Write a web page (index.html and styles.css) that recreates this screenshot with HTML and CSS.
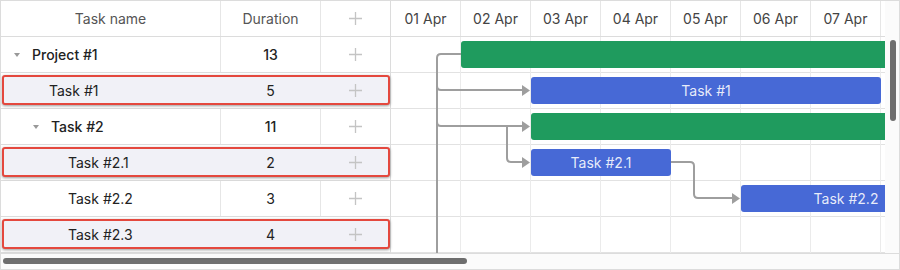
FILE: index.html
```html
<!DOCTYPE html>
<html>
<head>
<meta charset="utf-8">
<link rel="stylesheet" href="styles.css">
</head>
<body>
<div class="gantt">
  <div class="main">
    <div class="grid">
      <div class="g-head">
        <div class="c-name">Task name</div>
        <div class="c-dur">Duration</div>
        <div class="c-add"><svg class="plus" viewBox="0 0 14 14"><path d="M7 0V14M0 7H14"/></svg></div>
      </div>
      <div class="g-row bold">
        <div class="c-name"><span class="toggle open"></span><span>Project #1</span></div>
        <div class="c-dur">13</div>
        <div class="c-add"><svg class="plus" viewBox="0 0 14 14"><path d="M7 0V14M0 7H14"/></svg></div>
      </div>
      <div class="g-row selected">
        <div class="c-name"><span class="indent"></span><span class="leaf"></span><span>Task #1</span></div>
        <div class="c-dur">5</div>
        <div class="c-add"><svg class="plus" viewBox="0 0 14 14"><path d="M7 0V14M0 7H14"/></svg></div>
      </div>
      <div class="g-row bold">
        <div class="c-name"><span class="indent"></span><span class="toggle open"></span><span>Task #2</span></div>
        <div class="c-dur">11</div>
        <div class="c-add"><svg class="plus" viewBox="0 0 14 14"><path d="M7 0V14M0 7H14"/></svg></div>
      </div>
      <div class="g-row selected">
        <div class="c-name"><span class="indent"></span><span class="indent"></span><span class="leaf"></span><span>Task #2.1</span></div>
        <div class="c-dur">2</div>
        <div class="c-add"><svg class="plus" viewBox="0 0 14 14"><path d="M7 0V14M0 7H14"/></svg></div>
      </div>
      <div class="g-row">
        <div class="c-name"><span class="indent"></span><span class="indent"></span><span class="leaf"></span><span>Task #2.2</span></div>
        <div class="c-dur">3</div>
        <div class="c-add"><svg class="plus" viewBox="0 0 14 14"><path d="M7 0V14M0 7H14"/></svg></div>
      </div>
      <div class="g-row selected">
        <div class="c-name"><span class="indent"></span><span class="indent"></span><span class="leaf"></span><span>Task #2.3</span></div>
        <div class="c-dur">4</div>
        <div class="c-add"><svg class="plus" viewBox="0 0 14 14"><path d="M7 0V14M0 7H14"/></svg></div>
      </div>
    </div>
    <div class="chart">
      <div class="scale">
        <div class="day">01 Apr</div>
        <div class="day">02 Apr</div>
        <div class="day">03 Apr</div>
        <div class="day">04 Apr</div>
        <div class="day">05 Apr</div>
        <div class="day">06 Apr</div>
        <div class="day">07 Apr</div>
        <div class="day"></div>
      </div>
      <div class="canvas">
        <svg class="links" width="494" height="216" viewBox="0 0 494 216">
          <g class="ln">
            <path d="M70 17H50Q46 17 46 21V216"/>
            <path d="M46 49Q46 53 50 53H133"/>
            <path d="M46 85Q46 89 50 89H133"/>
            <path d="M116 89V121Q116 125 120 125H133"/>
            <path d="M280 125H299Q303 125 303 129V157Q303 161 307 161H343"/>
          </g>
          <g class="ah">
            <polygon points="131,48 139,53.5 131,59"/>
            <polygon points="131,84 139,89.5 131,95"/>
            <polygon points="131,120 139,125.5 131,131"/>
            <polygon points="341,156 349,161.5 341,167"/>
          </g>
        </svg>
        <div class="bar project" style="left:70px;top:4px;width:910px"></div>
        <div class="bar task" style="left:140px;top:40px;width:350px">Task #1</div>
        <div class="bar project" style="left:140px;top:76px;width:770px"></div>
        <div class="bar task" style="left:140px;top:112px;width:140px">Task #2.1</div>
        <div class="bar task" style="left:350px;top:148px;width:210px">Task #2.2</div>
      </div>
    </div>
    <div class="vgutter"><div class="vthumb"></div></div>
  </div>
  <div class="hscroll"><div class="hthumb"></div></div>
</div>
</body>
</html>
```

FILE: styles.css
```css
* { box-sizing: border-box; }
html, body { margin: 0; padding: 0; background: #fff; }
body {
  font-family: Inter, "Noto Sans", sans-serif;
  font-size: 14px;
  color: #222;
}
.gantt {
  width: 900px;
  height: 270px;
  border: 1px solid #dcdcdc;
  display: flex;
  flex-direction: column;
  overflow: hidden;
}
.main {
  display: flex;
  height: 252px;
}
.grid {
  width: 390px;
  flex: none;
  border-right: 1px solid #dcdcdc;
  display: flex;
  flex-direction: column;
}
.g-head, .g-row {
  height: 36px;
  flex: none;
  display: flex;
  border-bottom: 1px solid #dcdcdc;
}
.g-head { color: #555; }
.g-head > div, .g-row > div {
  display: flex;
  align-items: center;
  height: 100%;
}
.c-name { width: 220px; border-right: 1px solid #e6e6e6; }
.c-dur { width: 100px; border-right: 1px solid #e6e6e6; justify-content: center; }
.c-add { flex: 1; justify-content: center; }
.g-head .c-name { justify-content: center; }
.g-row .c-name { padding-left: 12px; }
.bold { font-weight: 500; }
.indent { width: 19px; flex: none; }
.leaf { width: 17px; flex: none; }
.toggle { width: 19px; flex: none; height: 100%; display: flex; align-items: center; }
.toggle.open::before {
  content: "";
  margin-left: 1px;
  border-left: 3.5px solid transparent;
  border-right: 3.5px solid transparent;
  border-top: 4px solid #999;
}
.plus {
  width: 13px;
  height: 13px;
  stroke: #c4c4c4;
  stroke-width: 1.4;
  fill: none;
}
.g-row.selected {
  position: relative;
  z-index: 0;
}
.g-row.selected > div { border-right-color: transparent; }
.g-row.selected::after {
  content: "";
  position: absolute;
  left: 1px;
  right: 0;
  top: 2px;
  bottom: 3px;
  z-index: -1;
  background: #f1f1f7;
  border: 2px solid #e4483e;
  border-radius: 3px;
  box-shadow: 0 1px 3px rgba(0,0,0,0.4);
}
.chart {
  width: 494px;
  flex: none;
  overflow: hidden;
  display: flex;
  flex-direction: column;
}
.scale {
  height: 36px;
  flex: none;
  display: flex;
  border-bottom: 1px solid #dcdcdc;
  color: #444;
}
.day {
  width: 70px;
  flex: none;
  border-right: 1px solid #e6e6e6;
  display: flex;
  align-items: center;
  justify-content: center;
}
.canvas {
  position: relative;
  height: 216px;
  flex: none;
  background-image:
    linear-gradient(to right, transparent 69px, #ebebeb 69px),
    linear-gradient(to bottom, transparent 35px, #e2e2e2 35px);
  background-size: 70px 100%, 100% 36px;
}
.links {
  position: absolute;
  left: 0;
  top: 0;
  overflow: visible;
}
.ln path {
  fill: none;
  stroke: #9e9e9e;
  stroke-width: 2;
}
.ah polygon { fill: #9e9e9e; }
.bar {
  position: absolute;
  height: 27px;
  border-radius: 3px;
  display: flex;
  align-items: center;
  justify-content: center;
  color: rgba(255,255,255,0.88);
  white-space: nowrap;
}
.bar.project { background: #1f9b5e; }
.bar.task { background: #4769d6; }
.vgutter {
  flex: 1;
  background: #fbfbfb;
  padding-top: 39px;
  padding-left: 5px;
}
.vthumb {
  width: 6px;
  height: 81px;
  border-radius: 3px;
  background: #6e6e6e;
}
.hscroll {
  flex: 1;
  border-top: 1px solid #dcdcdc;
  background: #fbfbfb;
  padding-top: 4px;
  padding-left: 2px;
}
.hthumb {
  width: 464px;
  height: 6px;
  border-radius: 3px;
  background: #6e6e6e;
}
```
